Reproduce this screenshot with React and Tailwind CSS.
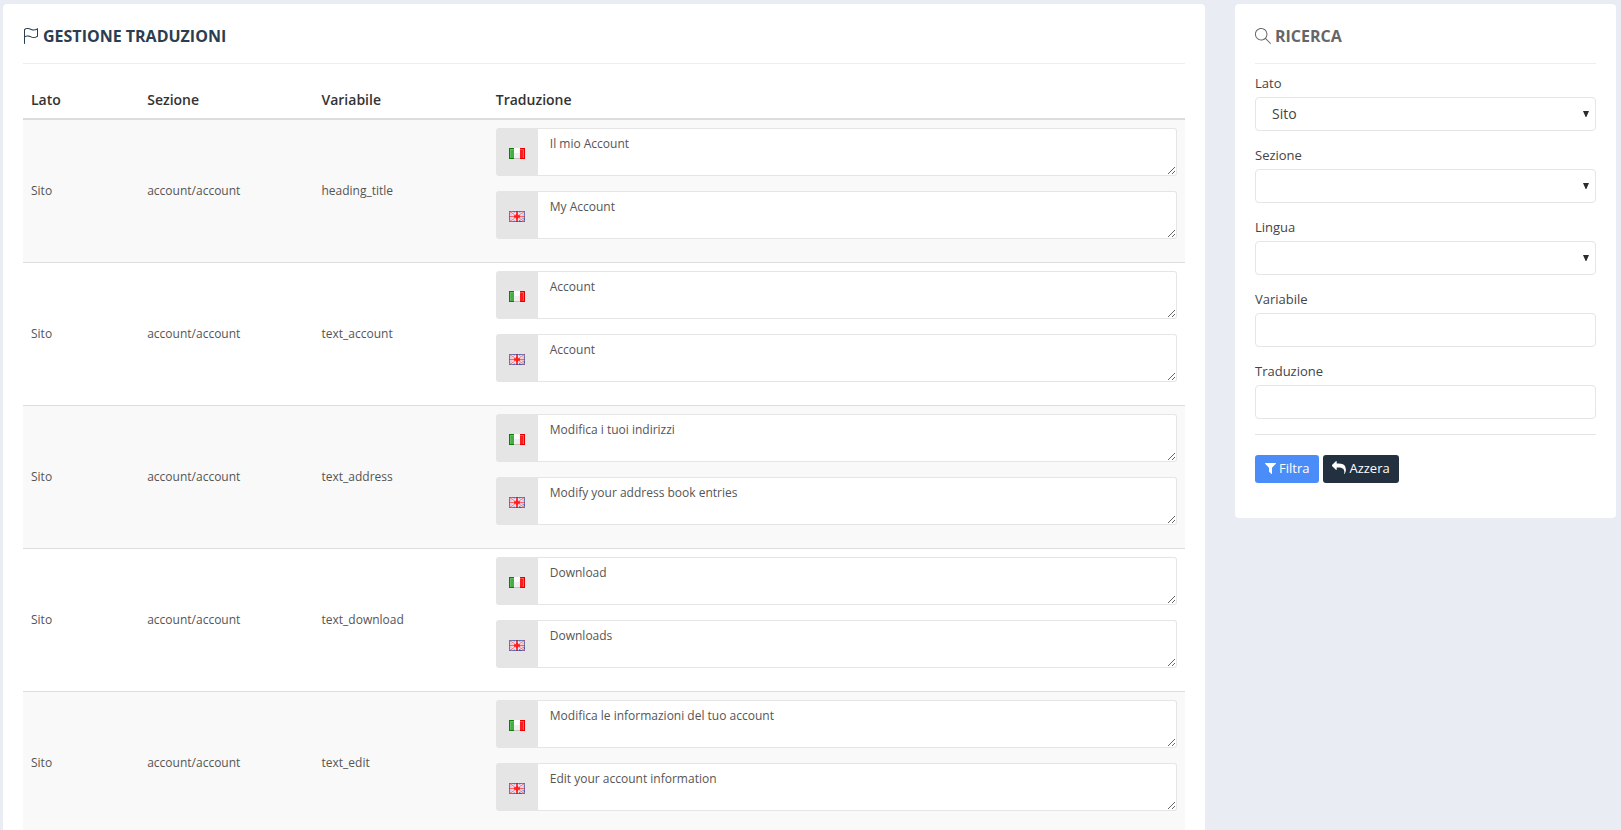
import { SlFlag, SlMagnifier } from "react-icons/sl";

const rows = [
  { variable: "heading_title", it: "Il mio Account", en: "My Account" },
  { variable: "text_account", it: "Account", en: "Account" },
  { variable: "text_address", it: "Modifica i tuoi indirizzi", en: "Modify your address book entries" },
  { variable: "text_download", it: "Download", en: "Downloads" },
  { variable: "text_edit", it: "Modifica le informazioni del tuo account", en: "Edit your account information" },
];

function ItalianFlag() {
  return (
    <svg width="16" height="11" viewBox="0 0 16 11" shapeRendering="crispEdges" aria-hidden="true">
      <rect width="5" height="11" fill="#078007" />
      <rect x="1" y="1" width="4" height="9" fill="#5fbf5f" />
      <rect x="2" y="2" width="3" height="8" fill="#45ad45" />
      <rect x="5" width="6" height="11" fill="#fdfdfd" />
      <rect x="5" y="5" width="6" height="5" fill="#efefef" />
      <rect x="5" y="10" width="6" height="1" fill="#c4c4c4" />
      <rect x="11" width="5" height="11" fill="#e80000" />
      <rect x="11" y="1" width="4" height="9" fill="#fb5a5a" />
      <rect x="11" y="2" width="3" height="8" fill="#f91f1f" />
    </svg>
  );
}

function BritishFlag() {
  return (
    <svg width="16" height="11" viewBox="0 0 16 11" aria-hidden="true">
      <rect width="16" height="11" fill="#a9b4f2" />
      <rect x="10" y="5" width="6" height="6" fill="#6f80de" />
      <path d="M0 0 16 11M16 0 0 11" stroke="#ffffff" strokeWidth="2.6" />
      <path d="M0 0 16 11M16 0 0 11" stroke="#f47c7c" strokeWidth="1.2" />
      <path d="M8 0V11M0 5.5H16" stroke="#ffffff" strokeOpacity="0.85" strokeWidth="3.4" />
      <path d="M8 0V11" stroke="#f33f3f" strokeWidth="2" />
      <path d="M0 5.5H16" stroke="#fa6464" strokeWidth="1.6" />
      <path d="M5 5.5H11M8 3V8" stroke="#ff1f1f" strokeWidth="2.4" />
      <path d="M0.5 0.5H15.5V10.5H0.5Z" fill="none" stroke="#26337d" strokeOpacity="0.55" />
    </svg>
  );
}

function TranslationField({ id, label, flag, value }) {
  return (
    <div className="mb-[15px] flex h-12">
      <label
        htmlFor={id}
        aria-label={label}
        className="flex w-[42px] shrink-0 items-center justify-center rounded-l-[3px] bg-[#e5e5e5] pt-[3px]"
      >
        {flag}
      </label>
      <textarea
        id={id}
        defaultValue={value}
        className="block h-12 min-w-0 flex-1 resize rounded-r-[3px] border border-l-0 border-[#e5e5e5] bg-white px-3 py-[6px] text-[12px] leading-[18px] text-[#555555] outline-none"
      />
    </div>
  );
}

function SelectField({ id, label, options }) {
  return (
    <div className="mb-[15px]">
      <label htmlFor={id} className="mb-[5px] block text-[13px] leading-[18px]">
        {label}
      </label>
      <div className="relative">
        <select
          id={id}
          className="block h-[34px] w-full appearance-none rounded-[4px] border border-[#e5e5e5] bg-white px-4 text-[14px] leading-5 text-[#444444] outline-none"
        >
          {options.map((option) => (
            <option key={option}>{option}</option>
          ))}
        </select>
        <svg
          className="pointer-events-none absolute top-[14px] right-[7px]"
          width="6"
          height="6"
          viewBox="0 0 6 6"
          aria-hidden="true"
        >
          <path d="M0 0H6L3.4 6H2.6Z" fill="#2b2b2b" />
        </svg>
      </div>
    </div>
  );
}

function InputField({ id, label }) {
  return (
    <div className="mb-[15px]">
      <label htmlFor={id} className="mb-[5px] block text-[13px] leading-[18px]">
        {label}
      </label>
      <input
        id={id}
        type="text"
        className="block h-[34px] w-full rounded-[4px] border border-[#e5e5e5] bg-white px-3 text-[14px] text-[#555555] outline-none"
      />
    </div>
  );
}

export default function App() {
  return (
    <div className="flex min-h-screen items-start gap-[30px] bg-[#e9ecf3] pt-1 pr-[5px] pl-[3px] font-['Open_Sans',sans-serif] text-[#444444]">
      <main className="min-w-0 flex-1 rounded-[4px] bg-white px-5 pt-5">
        <h1 className="flex h-10 items-start gap-1 border-b border-[#eeeeee] text-[16px] leading-6 font-bold text-[#2b3d50]">
          <SlFlag className="mt-1 size-4" aria-hidden="true" />
          GESTIONE TRADUZIONI
        </h1>
        <table className="mt-5 w-full table-fixed border-collapse text-left text-[12px] leading-[18px]">
          <thead>
            <tr className="border-b-2 border-[#dddddd] text-[14px] leading-5 text-[#333333]">
              <th className="w-[10%] px-2 pt-[6px] pb-2 font-semibold">Lato</th>
              <th className="w-[15%] px-2 pt-[6px] pb-2 font-semibold">Sezione</th>
              <th className="w-[15%] px-2 pt-[6px] pb-2 font-semibold">Variabile</th>
              <th className="px-2 pt-[6px] pb-2 font-semibold">Traduzione</th>
            </tr>
          </thead>
          <tbody>
            {rows.map((row) => (
              <tr key={row.variable} className="border-b border-[#dddddd] text-[#555555] odd:bg-[#f9f9f9]">
                <td className="px-2">Sito</td>
                <td className="px-2">account/account</td>
                <td className="px-2">{row.variable}</td>
                <td className="px-2 pt-2 pb-2">
                  <TranslationField id={row.variable + "-it"} label="Italiano" flag={<ItalianFlag />} value={row.it} />
                  <TranslationField id={row.variable + "-en"} label="English" flag={<BritishFlag />} value={row.en} />
                </td>
              </tr>
            ))}
          </tbody>
        </table>
      </main>

      <aside className="w-[381px] shrink-0 rounded-[4px] bg-white px-5 pt-5 pb-[35px]">
        <h2 className="flex h-10 items-start gap-1 border-b border-[#eeeeee] text-[16px] leading-6 font-bold text-[#666666]">
          <SlMagnifier className="mt-1 size-4" aria-hidden="true" />
          RICERCA
        </h2>
        <form className="pt-[10px]" onSubmit={(event) => event.preventDefault()}>
          <SelectField id="lato" label="Lato" options={["Sito"]} />
          <SelectField id="sezione" label="Sezione" options={[""]} />
          <SelectField id="lingua" label="Lingua" options={[""]} />
          <InputField id="variabile" label="Variabile" />
          <InputField id="traduzione" label="Traduzione" />
          <div className="flex gap-1 border-t border-[#e5e5e5] pt-5 text-[13px] leading-5 text-white">
            <button type="submit" className="flex h-7 items-center gap-[3px] rounded-[3px] bg-[#4b8df8] px-[10px] pb-[2px]">
              <svg className="h-[14px] w-[11px]" viewBox="0 0 1408 1792" fill="currentColor" aria-hidden="true">
                <path d="M1403 295q17 41-14 70l-493 493v742q0 42-39 59-13 5-25 5-27 0-45-19l-256-256q-19-19-19-45v-486l-493-493q-31-29-14-70 17-39 59-39h1280q42 0 59 39z" />
              </svg>
              Filtra
            </button>
            <button type="reset" className="flex h-7 items-center gap-[3px] rounded-[3px] bg-[#22303f] px-[9px] pb-[2px]">
              <svg className="size-[14px]" viewBox="0 0 1792 1792" fill="currentColor" aria-hidden="true">
                <path d="M1792 1120q0 166-127 451-3 7-10.5 24t-13.5 30-13 22q-12 17-28 17-15 0-23.5-10t-8.5-25q0-9 2.5-26.5t2.5-23.5q5-68 5-123 0-112-19.5-200.5t-54-153.5-89-112-115-78-140.5-49-157.5-24.5-176-7h-224v256q0 26-19 45t-45 19-45-19l-512-512q-19-19-19-45t19-45l512-512q19-19 45-19t45 19 19 45v256h224q713 0 875 403 53 134 53 333z" />
              </svg>
              Azzera
            </button>
          </div>
        </form>
      </aside>
    </div>
  );
}
